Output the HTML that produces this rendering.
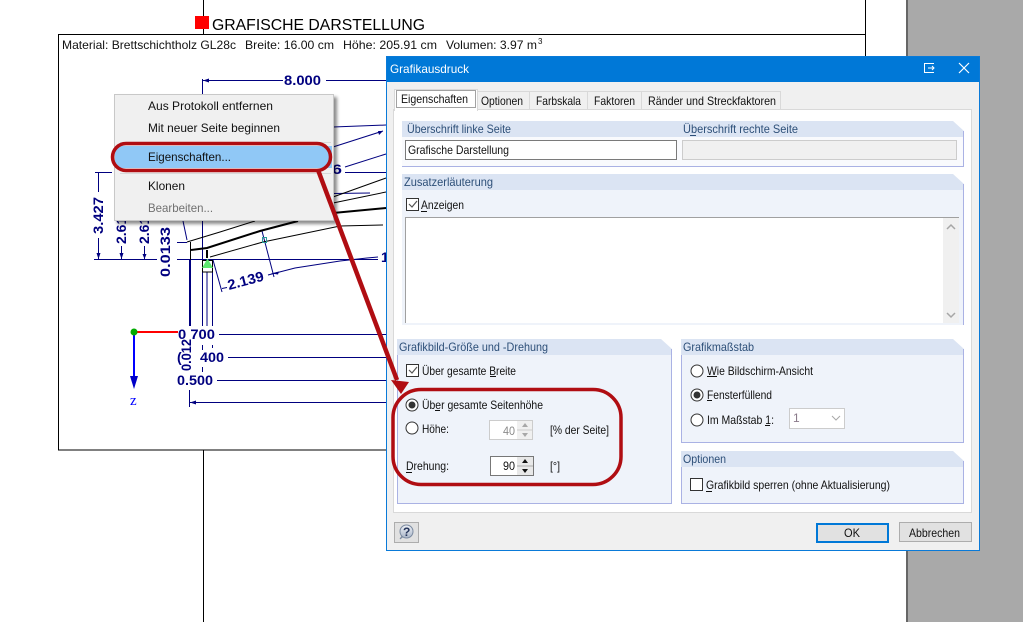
<!DOCTYPE html>
<html lang="de"><head><meta charset="utf-8"><title>Grafikausdruck</title>
<style>
html,body{margin:0;padding:0;background:#fff;width:1023px;height:622px;overflow:hidden}
svg{display:block;font-family:"Liberation Sans",sans-serif;font-size:12px}
.d{fill:#00007f;font-weight:bold;font-size:14px}
.h{fill:#2d4f78}
.t{fill:#111}
</style></head><body>
<svg width="1023" height="622" viewBox="0 0 1023 622" xmlns="http://www.w3.org/2000/svg">
<defs>
<filter id="s" x="-5%" y="-5%" width="115%" height="115%"><feDropShadow dx="3" dy="3" stdDeviation="1.500" flood-color="#000" flood-opacity=".45"/></filter>
<linearGradient id="hb" x1="0" y1="0" x2="0" y2="1"><stop offset="0" stop-color="#eef1f6"/><stop offset="1" stop-color="#aab6c8"/></linearGradient>
</defs>
<rect width="1023" height="622" fill="#fff"/>
<rect x="906" width="117" height="622" fill="#a9a9a9"/>
<rect x="906" width="2" height="622" fill="#666"/>
<path d="M203.500 0V35M203.500 450V622M865.500 0V56" stroke="#000" fill="none"/>
<rect x="195" y="16" width="14" height="13" fill="#f00"/>
<text x="212" y="30" font-size="16" textLength="213" lengthAdjust="spacingAndGlyphs">GRAFISCHE DARSTELLUNG</text>
<rect x="58.500" y="34.500" width="807" height="415.500" fill="none" stroke="#000"/>
<g fill="#111">
<text x="62" y="49" textLength="174" lengthAdjust="spacingAndGlyphs">Material: Brettschichtholz GL28c</text>
<text x="245" y="49" textLength="89" lengthAdjust="spacingAndGlyphs">Breite: 16.00 cm</text>
<text x="343" y="49" textLength="94" lengthAdjust="spacingAndGlyphs">Höhe: 205.91 cm</text>
<text x="446" y="49" textLength="91" lengthAdjust="spacingAndGlyphs">Volumen: 3.97 m</text>
<text x="538" y="44" font-size="8">3</text>
</g>

<!-- drawing -->
<g fill="none" stroke="#00007f">
<path d="M202.500 79V94M203 80.500H283M326 80.500H386"/>
<path d="M333 127L386 125M333 147L383 131M345 167L386 154M345 172.500H386M333 193.500L370 193"/>
<path d="M95 172.500H112M98.500 172V192M98.500 238V259M94 259.500H157M177 259.500H378M121.500 246V259M144.500 246V259"/>
<path d="M177 242.500H187M183 221L187 240"/>
<path d="M202.500 220V330M207 272V330M212.500 272V330M202.500 345V350M212.500 345V348M202.500 367V372"/>
<path d="M262 231L274 277M213 260L222 292M222 288.500L227 287.500M268 275L295 268L340 261L367 258L378 257"/>
<path d="M219 334.500H386M228 357.500H386M217 380.500H386M190 402.500H386M189.500 390V407"/>
</g>
<path d="M190 259V326" stroke="#00007f" stroke-width="2" fill="none"/>
<g fill="#00007f">
<path d="M203 80.500l6-2v4zM98.500 259l-2-6h4zM121.500 259l-2-6h4zM144.500 259l-2-5h4zM383 131l-5 0 1 4zM190 402.500l6-2v4zM271 273.500l8-2-1 3z"/>
</g>
<g fill="none" stroke="#000">
<path d="M187 242L220 232L255 221M210 257L263 242L340 226L383 225M333 197L386 178M333 203L386 192M190.500 242V260"/>
<path d="M191 250L207 248L260 231L298 221M333 213L386 208" stroke-width="2"/>
<path d="M207 250V258" stroke-width="2"/>
<rect x="202.500" y="260.500" width="10" height="11.500"/>
</g>
<path d="M207.500 258.500L213 268H202Z" fill="#5fe86f"/>
<rect x="262.500" y="237.500" width="4" height="5" fill="none" stroke="#2a9a9a"/>
<text class="d" x="284" y="85" textLength="37" lengthAdjust="spacingAndGlyphs">8.000</text>
<text class="d" x="332" y="174" textLength="10" lengthAdjust="spacingAndGlyphs">6</text>
<text class="d" x="381" y="262">1</text>
<text class="d" transform="translate(103,234) rotate(-90)" textLength="37" lengthAdjust="spacingAndGlyphs">3.427</text>
<text class="d" transform="translate(126,244) rotate(-90)">2.61</text>
<text class="d" transform="translate(149,244) rotate(-90)">2.61</text>
<text class="d" transform="translate(170,277) rotate(-90)" textLength="50" lengthAdjust="spacingAndGlyphs">0.0133</text>
<text class="d" transform="translate(229,290) rotate(-15)" textLength="37" lengthAdjust="spacingAndGlyphs">2.139</text>
<rect x="176" y="326" width="40" height="16" fill="#fff"/>
<text class="d" x="178" y="339" textLength="37" lengthAdjust="spacingAndGlyphs">0 700</text>
<text class="d" x="177" y="362">(</text>
<text class="d" x="200" y="362" textLength="24" lengthAdjust="spacingAndGlyphs">400</text>
<text class="d" transform="translate(191,371) rotate(-90)" textLength="32" lengthAdjust="spacingAndGlyphs">0.012</text>
<text class="d" x="177" y="385" textLength="36" lengthAdjust="spacingAndGlyphs">0.500</text>
<path d="M134 332H178" stroke="#f00" stroke-width="2"/>
<path d="M134 332V376" stroke="#00f" stroke-width="2"/>
<path d="M130 376h8l-4 13z" fill="#0000c8"/>
<circle cx="134" cy="332" r="3.500" fill="#0a0"/>
<text x="130" y="405" font-family="Liberation Serif,serif" font-size="15" fill="#00f">z</text>

<!-- context menu -->
<rect x="114.500" y="94.500" width="219" height="126" fill="#f0f0f0" stroke="#c8c8c8" filter="url(#s)"/>
<path d="M120 142.500H331M120 173.500H331" stroke="#d8d8d8"/>
<rect x="115" y="146" width="217" height="22" fill="#90c8f6"/>
<g class="t">
<text x="148" y="110" textLength="125" lengthAdjust="spacingAndGlyphs">Aus Protokoll entfernen</text>
<text x="148" y="132" textLength="132" lengthAdjust="spacingAndGlyphs">Mit neuer Seite beginnen</text>
<text x="148" y="161" textLength="83" lengthAdjust="spacingAndGlyphs">Eigenschaften...</text>
<text x="148" y="190" textLength="37" lengthAdjust="spacingAndGlyphs">Klonen</text>
</g>
<text x="148" y="212" textLength="65" lengthAdjust="spacingAndGlyphs" fill="#707070">Bearbeiten...</text>
<rect x="112.500" y="143.500" width="218" height="27" rx="13.500" fill="none" stroke="#b00d12" stroke-width="3.500"/>

<!-- dialog -->
<rect x="386.500" y="56.500" width="593" height="494" fill="#f0f0f0" stroke="#0a7ad8"/>
<rect x="387" y="57" width="592" height="25" fill="#0078d7"/>
<text x="390" y="73" fill="#fff" textLength="79" lengthAdjust="spacingAndGlyphs">Grafikausdruck</text>
<path d="M934 63.500H924.500V72.500H934M928 68H934M932 66l2 2-2 2" fill="none" stroke="#fff"/>
<path d="M959 63l10 10M969 63l-10 10" stroke="#fff" stroke-width="1.200" fill="none"/>

<!-- tabs -->
<rect x="393.500" y="109.500" width="578" height="403" fill="#fff" stroke="#d9d9d9"/>
<g fill="#f0f0f0" stroke="#d9d9d9">
<rect x="477.500" y="91.500" width="52" height="18"/>
<rect x="529.500" y="91.500" width="58" height="18"/>
<rect x="587.500" y="91.500" width="54" height="18"/>
<rect x="641.500" y="91.500" width="139" height="18"/>
</g>
<rect x="394.500" y="89.500" width="83" height="21" fill="#fff" stroke="#d9d9d9"/>
<rect x="395" y="109" width="82" height="2" fill="#fff"/>
<rect x="396.500" y="90.500" width="79" height="17" fill="none" stroke="#444" stroke-dasharray="1 1"/>
<g class="t">
<text x="401" y="103" textLength="67" lengthAdjust="spacingAndGlyphs">Eigenschaften</text>
<text x="481" y="105" textLength="42" lengthAdjust="spacingAndGlyphs">Optionen</text>
<text x="536" y="105" textLength="45" lengthAdjust="spacingAndGlyphs">Farbskala</text>
<text x="594" y="105" textLength="41" lengthAdjust="spacingAndGlyphs">Faktoren</text>
<text x="648" y="105" textLength="128" lengthAdjust="spacingAndGlyphs">Ränder und Streckfaktoren</text>
</g>

<!-- group 1 -->
<rect x="402" y="137" width="561" height="29" fill="#f9fafd"/>
<path d="M402 121H953L964 131V137H402Z" fill="#dbe4f3"/>
<path d="M963.500 131V166.500H402" fill="none" stroke="#aab2e4"/>
<text class="h" x="407" y="133" textLength="104" lengthAdjust="spacingAndGlyphs">Überschrift linke Seite</text>
<text class="h" x="683" y="133" textLength="115" lengthAdjust="spacingAndGlyphs">Überschrift rechte Seite</text>
<path d="M690 135.500H696" stroke="#2d4f78"/>
<rect x="405.500" y="140.500" width="271" height="19" fill="#fff" stroke="#7a7a7a"/>
<text class="t" x="408" y="154" textLength="101" lengthAdjust="spacingAndGlyphs">Grafische Darstellung</text>
<rect x="682.500" y="140.500" width="274" height="19" fill="#f0f0f0" stroke="#ccc"/>

<!-- group 2 -->
<rect x="402" y="190" width="561" height="135" fill="#eff3fa"/>
<path d="M402 174H953L964 184V190H402Z" fill="#dbe4f3"/>
<path d="M963.500 184V325" fill="none" stroke="#aab2e4"/>
<text class="h" x="404" y="186" textLength="89" lengthAdjust="spacingAndGlyphs">Zusatzerläuterung</text>
<rect x="406.500" y="198.500" width="12" height="12" fill="#fff" stroke="#333"/>
<path d="M409 204l3 3 5-6" fill="none" stroke="#555" stroke-width="1.200"/>
<text class="t" x="421" y="209" textLength="43" lengthAdjust="spacingAndGlyphs">Anzeigen</text>
<path d="M421 211.500H427" stroke="#111"/>
<rect x="405" y="217" width="554" height="106" fill="#fff"/>
<path d="M405.500 323V217.500H959" fill="none" stroke="#a0a0a0"/>
<rect x="943" y="218" width="16" height="105" fill="#f0f0f0"/>
<path d="M947 229l4-4 4 4M947 313l4 4 4-4" fill="none" stroke="#a6a6a6" stroke-width="1.500"/>

<!-- group size -->
<rect x="397" y="355" width="275" height="148" fill="#eff3fa"/>
<path d="M397 339H661L672 349V355H397Z" fill="#dbe4f3"/>
<path d="M397.500 355V503.500H671.500V349" fill="none" stroke="#aab2e4"/>
<text class="h" x="399" y="351" textLength="149" lengthAdjust="spacingAndGlyphs">Grafikbild-Größe und -Drehung</text>
<rect x="406.500" y="364.500" width="12" height="12" fill="#fff" stroke="#333"/>
<path d="M409 370l3 3 5-6" fill="none" stroke="#555" stroke-width="1.200"/>
<text class="t" x="422" y="375" textLength="94" lengthAdjust="spacingAndGlyphs">Über gesamte Breite</text>
<circle cx="412" cy="405" r="6" fill="#fff" stroke="#333"/><circle cx="412" cy="405" r="3.500" fill="#333"/>
<text class="t" x="422" y="409" textLength="121" lengthAdjust="spacingAndGlyphs">Über gesamte Seitenhöhe</text>
<circle cx="412" cy="428" r="6" fill="#fff" stroke="#333"/>
<text class="t" x="422" y="433" textLength="27" lengthAdjust="spacingAndGlyphs">Höhe:</text>
<rect x="489.500" y="420.500" width="43" height="19" fill="#fff" stroke="#ccc"/>
<text x="503" y="435" fill="#8a8a8a" textLength="12" lengthAdjust="spacingAndGlyphs">40</text>
<rect x="517" y="421" width="15" height="18" fill="#f0f0f0"/>
<path d="M517 430H532" stroke="#ccc"/>
<path d="M525 423l3 4h-6zM525 437l3-4h-6z" fill="#a8a8a8"/>
<text class="t" x="550" y="434" textLength="59" lengthAdjust="spacingAndGlyphs">[% der Seite]</text>
<text class="t" x="406" y="470" textLength="43" lengthAdjust="spacingAndGlyphs">Drehung:</text>
<path d="M406 472.500H412" stroke="#111"/>
<rect x="490.500" y="456.500" width="43" height="19" fill="#fff" stroke="#777"/>
<text class="t" x="503" y="470" textLength="12" lengthAdjust="spacingAndGlyphs">90</text>
<rect x="517" y="457" width="16" height="18" fill="#e8e8e8"/>
<path d="M517 466H533" stroke="#aaa"/>
<path d="M525 459l3 4h-6zM525 473l3-4h-6z" fill="#111"/>
<text class="t" x="550" y="470" textLength="10" lengthAdjust="spacingAndGlyphs">[°]</text>

<!-- group scale -->
<rect x="681" y="355" width="283" height="87" fill="#eff3fa"/>
<path d="M681 339H953L964 349V355H681Z" fill="#dbe4f3"/>
<path d="M681.500 355V442.500H963.500V349" fill="none" stroke="#aab2e4"/>
<text class="h" x="683" y="351" textLength="71" lengthAdjust="spacingAndGlyphs">Grafikmaßstab</text>
<circle cx="697" cy="371" r="6" fill="#fff" stroke="#333"/>
<text class="t" x="707" y="375" textLength="106" lengthAdjust="spacingAndGlyphs">Wie Bildschirm-Ansicht</text>
<circle cx="697" cy="395" r="6" fill="#fff" stroke="#333"/><circle cx="697" cy="395" r="3.500" fill="#333"/>
<text class="t" x="707" y="399" textLength="65" lengthAdjust="spacingAndGlyphs">Fensterfüllend</text>
<circle cx="697" cy="420" r="6" fill="#fff" stroke="#333"/>
<text class="t" x="707" y="424" textLength="67" lengthAdjust="spacingAndGlyphs">Im Maßstab 1:</text>
<rect x="789.500" y="408.500" width="55" height="20" fill="#fff" stroke="#ccc"/>
<text x="793" y="422" fill="#8a7a8a">1</text>
<path d="M832 416l4 4 4-4" fill="none" stroke="#a8a8a8"/>

<!-- group options -->
<rect x="681" y="467" width="283" height="36" fill="#eff3fa"/>
<path d="M681 451H953L964 461V467H681Z" fill="#dbe4f3"/>
<path d="M681.500 467V503.500H963.500V461" fill="none" stroke="#aab2e4"/>
<text class="h" x="683" y="463" textLength="43" lengthAdjust="spacingAndGlyphs">Optionen</text>
<rect x="690.500" y="478.500" width="12" height="12" fill="#fff" stroke="#333"/>
<text class="t" x="706" y="489" textLength="184" lengthAdjust="spacingAndGlyphs">Grafikbild sperren (ohne Aktualisierung)</text>

<path d="M707 376.500H717M707 400.500H712M706 491.500H712M435 410.500H440M490 376.500H496M765 425.500H770" stroke="#111"/>

<!-- buttons -->
<rect x="394.500" y="522.500" width="24" height="20" fill="#e1e1e1" stroke="#adadad"/>
<path d="M400 539l2-3 3-1z" fill="#aab6c8" stroke="#7b8aa0"/>
<circle cx="406.500" cy="531.500" r="6.500" fill="url(#hb)" stroke="#7b8aa0"/>
<text x="403" y="536" font-size="12" font-weight="bold" fill="#24345a">?</text>
<rect x="817" y="524" width="71" height="18" fill="#e1e1e1" stroke="#0078d7" stroke-width="2"/>
<text class="t" x="844" y="537" textLength="16" lengthAdjust="spacingAndGlyphs">OK</text>
<rect x="899.500" y="522.500" width="72" height="19" fill="#e1e1e1" stroke="#adadad"/>
<text class="t" x="909" y="537" textLength="51" lengthAdjust="spacingAndGlyphs">Abbrechen</text>

<!-- annotations -->
<rect x="393" y="389.500" width="228" height="95" rx="28" fill="none" stroke="#b00d12" stroke-width="3.500"/>
<path d="M318 170L397 380" stroke="#b00d12" stroke-width="4.500" fill="none"/>
<path d="M391 380L409 382L401 394Z" fill="#b00d12"/>
</svg>
</body></html>
